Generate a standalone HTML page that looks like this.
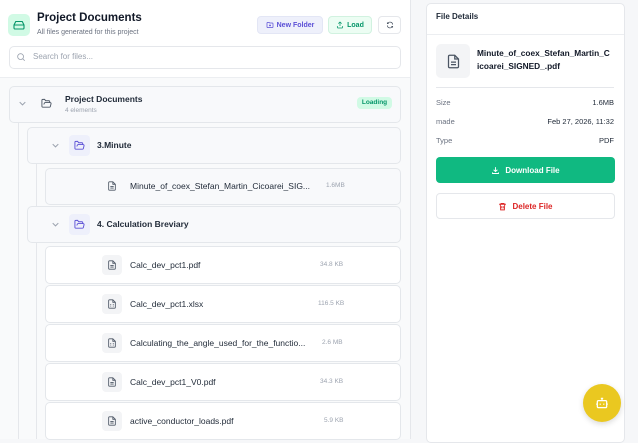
<!DOCTYPE html>
<html><head><style>
*{box-sizing:border-box;margin:0;padding:0}
body{width:638px;height:439px;overflow:hidden;background:#f6f7f9;font-family:"Liberation Sans",sans-serif;position:relative;color:#1f2937}
.abs{position:absolute}
.left{left:0;top:0;width:411px;height:439px;background:#f9fafb;border-right:1px solid #e5e7eb}
.hdr{left:0;top:0;width:410px;height:78px;background:#fff;border-bottom:1px solid #eceef1}
.row{position:absolute;background:#fff;border:1px solid #e4e7eb;border-radius:5px}
.row.f{background:#f8f9fb}
.t{font-size:8.5px;font-weight:bold;color:#1f2937;position:absolute}
.sz{font-size:6.5px;color:#9ca3af;position:absolute}
.ico{position:absolute;width:20px;height:20px;border-radius:4px;background:#f3f4f6;display:flex;align-items:center;justify-content:center}
.vl{position:absolute;width:1px;background:#e5e7eb}
.chev{position:absolute}
</style></head><body>
<div class="abs left"></div>
<div class="abs hdr"></div>
<div class="abs" style="left:8px;top:14px;width:22px;height:22px;border-radius:5px;background:#d1fae5;display:flex;align-items:center;justify-content:center">
<svg width="12" height="12" viewBox="0 0 24 24" fill="none" stroke="#059669" stroke-width="2.2"><path d="M22 12H2M5.5 5h13L22 12v6a2 2 0 0 1-2 2H4a2 2 0 0 1-2-2v-6z"/><path d="M6 16h.01M10 16h.01"/></svg></div>
<div class="abs" style="left:37px;top:12px;font-size:11.5px;font-weight:bold;color:#111827">Project Documents</div>
<div class="abs" style="left:37px;top:29px;font-size:7px;color:#6b7280">All files generated for this project</div>
<div class="abs" style="left:257px;top:16px;width:66px;height:18px;border-radius:4px;background:#eef0fb;border:1px solid #e3e6f5;font-size:7px;font-weight:bold;color:#5b4fd6;display:flex;align-items:center;justify-content:center;gap:3px"><svg width="8" height="8" viewBox="0 0 24 24" fill="none" stroke="#5b4fd6" stroke-width="2.2"><path d="M3 6a2 2 0 0 1 2-2h4l2 2h8a2 2 0 0 1 2 2v10a2 2 0 0 1-2 2H5a2 2 0 0 1-2-2z"/><path d="M12 10v6M9 13h6"/></svg>New Folder</div>
<div class="abs" style="left:328px;top:16px;width:44px;height:18px;border-radius:4px;background:#ecfdf3;border:1px solid #d1f2e0;font-size:7px;font-weight:bold;color:#059669;display:flex;align-items:center;justify-content:center;gap:3px"><svg width="8" height="8" viewBox="0 0 24 24" fill="none" stroke="#059669" stroke-width="2.2"><path d="M12 15V3M7 8l5-5 5 5M4 15v4a2 2 0 0 0 2 2h12a2 2 0 0 0 2-2v-4"/></svg>Load</div>
<div class="abs" style="left:378px;top:16px;width:23px;height:18px;border-radius:4px;background:#fff;border:1px solid #e5e7eb;display:flex;align-items:center;justify-content:center"><svg width="8" height="8" viewBox="0 0 24 24" fill="none" stroke="#4b5563" stroke-width="2.2"><path d="M20 11a8 8 0 0 0-14-5L4 8M4 4v4h4M4 13a8 8 0 0 0 14 5l2-2M20 20v-4h-4"/></svg></div>
<div class="abs" style="left:9px;top:46px;width:392px;height:23px;border:1px solid #e5e7eb;border-radius:5px;background:#fff"></div>
<svg class="abs" style="left:16px;top:52px" width="10" height="10" viewBox="0 0 24 24" fill="none" stroke="#9ca3af" stroke-width="2"><circle cx="11" cy="11" r="7"/><path d="M21 21l-5-5"/></svg>
<div class="abs" style="left:33px;top:52px;font-size:8px;color:#9ca3af">Search for files...</div>

<div class="vl" style="left:18px;top:122px;height:317px"></div>
<div class="vl" style="left:36px;top:163px;height:43px"></div>
<div class="vl" style="left:36px;top:243px;height:196px"></div>

<div class="row f" style="left:9px;top:86px;width:392px;height:37px"></div>
<svg class="chev" style="left:19px;top:101px" width="7" height="5" viewBox="0 0 10 6" fill="none" stroke="#9ca3af" stroke-width="1.4"><path d="M1 1l4 4 4-4"/></svg>
<svg class="abs" style="left:41px;top:98px" width="11" height="11" viewBox="0 0 24 24" fill="none" stroke="#4b5563" stroke-width="2"><path d="M6 14l1.5-3A2 2 0 0 1 9.2 10H20a2 2 0 0 1 1.9 2.5l-1.5 6A2 2 0 0 1 18.5 20H4a2 2 0 0 1-2-2V5a2 2 0 0 1 2-2h4l2 3h7a2 2 0 0 1 2 2v2"/></svg>
<div class="t" style="left:65px;top:94px">Project Documents</div>
<div class="sz" style="left:65px;top:107px;font-size:6.5px">4 elements</div>
<div class="abs" style="left:357px;top:97px;width:35px;height:12px;border-radius:4px;background:#d1fae5;color:#059669;font-size:6.5px;font-weight:bold;text-align:center;line-height:12px">Loading</div>

<div class="row f" style="left:27px;top:127px;width:374px;height:37px"></div>
<svg class="chev" style="left:52px;top:143px" width="7" height="5" viewBox="0 0 10 6" fill="none" stroke="#9ca3af" stroke-width="1.4"><path d="M1 1l4 4 4-4"/></svg>
<div class="ico" style="left:69px;top:135px;width:21px;height:21px;background:#eef0fb"><svg width="11" height="11" viewBox="0 0 24 24" fill="none" stroke="#5b4fd6" stroke-width="2"><path d="M6 14l1.5-3A2 2 0 0 1 9.2 10H20a2 2 0 0 1 1.9 2.5l-1.5 6A2 2 0 0 1 18.5 20H4a2 2 0 0 1-2-2V5a2 2 0 0 1 2-2h4l2 3h7a2 2 0 0 1 2 2v2"/></svg></div>
<div class="t" style="left:97px;top:140px">3.Minute</div>

<div class="row f" style="left:45px;top:168px;width:356px;height:37px"></div>
<div class="ico" style="left:102px;top:176px;background:transparent"><svg width="10" height="10" viewBox="0 0 24 24" fill="none" stroke="#4b5563" stroke-width="2"><path d="M14 2H6a2 2 0 0 0-2 2v16a2 2 0 0 0 2 2h12a2 2 0 0 0 2-2V8z"/><path d="M14 2v6h6M8 13h8M8 17h8"/></svg></div>
<div class="t" style="left:130px;top:181px;font-weight:normal;color:#1f2937">Minute_of_coex_Stefan_Martin_Cicoarei_SIG...</div>
<div class="sz" style="left:326px;top:182px">1.6MB</div>

<div class="row f" style="left:27px;top:206px;width:374px;height:37px"></div>
<svg class="chev" style="left:52px;top:222px" width="7" height="5" viewBox="0 0 10 6" fill="none" stroke="#9ca3af" stroke-width="1.4"><path d="M1 1l4 4 4-4"/></svg>
<div class="ico" style="left:69px;top:214px;width:21px;height:21px;background:#eef0fb"><svg width="11" height="11" viewBox="0 0 24 24" fill="none" stroke="#5b4fd6" stroke-width="2"><path d="M6 14l1.5-3A2 2 0 0 1 9.2 10H20a2 2 0 0 1 1.9 2.5l-1.5 6A2 2 0 0 1 18.5 20H4a2 2 0 0 1-2-2V5a2 2 0 0 1 2-2h4l2 3h7a2 2 0 0 1 2 2v2"/></svg></div>
<div class="t" style="left:97px;top:219px">4. Calculation Breviary</div>

<div class="row" style="left:45px;top:246px;width:356px;height:38px"></div>
<div class="ico" style="left:102px;top:255px"><svg width="10" height="10" viewBox="0 0 24 24" fill="none" stroke="#4b5563" stroke-width="2"><path d="M14 2H6a2 2 0 0 0-2 2v16a2 2 0 0 0 2 2h12a2 2 0 0 0 2-2V8z"/><path d="M14 2v6h6M8 13h8M8 17h8"/></svg></div>
<div class="t" style="left:130px;top:260px;font-weight:normal">Calc_dev_pct1.pdf</div>
<div class="sz" style="left:320px;top:261px">34.8 KB</div>

<div class="row" style="left:45px;top:285px;width:356px;height:38px"></div>
<div class="ico" style="left:102px;top:294px"><svg width="10" height="10" viewBox="0 0 24 24" fill="none" stroke="#4b5563" stroke-width="2"><path d="M14 2H6a2 2 0 0 0-2 2v16a2 2 0 0 0 2 2h12a2 2 0 0 0 2-2V8z"/><path d="M14 2v6h6M8 13h2M14 13h2M8 17h2M14 17h2"/></svg></div>
<div class="t" style="left:130px;top:299px;font-weight:normal">Calc_dev_pct1.xlsx</div>
<div class="sz" style="left:318px;top:300px">116.5 KB</div>

<div class="row" style="left:45px;top:324px;width:356px;height:38px"></div>
<div class="ico" style="left:102px;top:333px"><svg width="10" height="10" viewBox="0 0 24 24" fill="none" stroke="#4b5563" stroke-width="2"><path d="M14 2H6a2 2 0 0 0-2 2v16a2 2 0 0 0 2 2h12a2 2 0 0 0 2-2V8z"/><path d="M14 2v6h6M8 13h2M14 13h2M8 17h2M14 17h2"/></svg></div>
<div class="t" style="left:130px;top:338px;font-weight:normal">Calculating_the_angle_used_for_the_functio...</div>
<div class="sz" style="left:322px;top:339px">2.6 MB</div>

<div class="row" style="left:45px;top:363px;width:356px;height:38px"></div>
<div class="ico" style="left:102px;top:372px"><svg width="10" height="10" viewBox="0 0 24 24" fill="none" stroke="#4b5563" stroke-width="2"><path d="M14 2H6a2 2 0 0 0-2 2v16a2 2 0 0 0 2 2h12a2 2 0 0 0 2-2V8z"/><path d="M14 2v6h6M8 13h8M8 17h8"/></svg></div>
<div class="t" style="left:130px;top:377px;font-weight:normal">Calc_dev_pct1_V0.pdf</div>
<div class="sz" style="left:320px;top:378px">34.3 KB</div>

<div class="row" style="left:45px;top:402px;width:356px;height:38px"></div>
<div class="ico" style="left:102px;top:411px"><svg width="10" height="10" viewBox="0 0 24 24" fill="none" stroke="#4b5563" stroke-width="2"><path d="M14 2H6a2 2 0 0 0-2 2v16a2 2 0 0 0 2 2h12a2 2 0 0 0 2-2V8z"/><path d="M14 2v6h6M8 13h8M8 17h8"/></svg></div>
<div class="t" style="left:130px;top:416px;font-weight:normal">active_conductor_loads.pdf</div>
<div class="sz" style="left:324px;top:417px">5.9 KB</div>

<!-- right panel -->
<div class="abs" style="left:426px;top:3px;width:199px;height:440px;background:#fff;border:1px solid #e5e7eb;border-radius:5px"></div>
<div class="abs" style="left:427px;top:34px;width:197px;height:1px;background:#eceef1"></div>
<div class="abs" style="left:436px;top:12px;font-size:8px;font-weight:bold;color:#1f2937">File Details</div>
<div class="abs" style="left:436px;top:44px;width:34px;height:34px;border-radius:5px;background:#f3f4f6;display:flex;align-items:center;justify-content:center"><svg width="15" height="15" viewBox="0 0 24 24" fill="none" stroke="#4b5563" stroke-width="2"><path d="M14 2H6a2 2 0 0 0-2 2v16a2 2 0 0 0 2 2h12a2 2 0 0 0 2-2V8z"/><path d="M14 2v6h6M8 13h8M8 17h8"/></svg></div>
<div class="abs" style="left:477px;top:47px;width:136px;font-size:8.3px;font-weight:bold;line-height:13px;color:#111827">Minute_of_coex_Stefan_Martin_C<br>icoarei_SIGNED_.pdf</div>
<div class="abs" style="left:436px;top:87px;width:178px;height:1px;background:#e5e7eb"></div>
<div class="abs" style="left:436px;top:98px;font-size:7.5px;color:#6b7280">Size</div>
<div class="abs" style="left:436px;top:117px;font-size:7.5px;color:#6b7280">made</div>
<div class="abs" style="left:436px;top:136px;font-size:7.5px;color:#6b7280">Type</div>
<div class="abs" style="right:24px;top:98px;font-size:7.5px;color:#1f2937">1.6MB</div>
<div class="abs" style="right:24px;top:117px;font-size:7.5px;color:#1f2937">Feb 27, 2026, 11:32</div>
<div class="abs" style="right:24px;top:136px;font-size:7.5px;color:#1f2937">PDF</div>
<div class="abs" style="left:436px;top:157px;width:179px;height:26px;border-radius:4px;background:#10b981;color:#fff;font-size:8px;font-weight:bold;display:flex;align-items:center;justify-content:center;gap:5px"><svg width="9" height="9" viewBox="0 0 24 24" fill="none" stroke="#fff" stroke-width="2.4"><path d="M12 3v12M7 10l5 5 5-5M4 17v3h16v-3"/></svg>Download File</div>
<div class="abs" style="left:436px;top:193px;width:179px;height:26px;border-radius:4px;background:#fff;border:1px solid #e5e7eb;color:#dc2626;font-size:8px;font-weight:bold;display:flex;align-items:center;justify-content:center;gap:5px"><svg width="9" height="9" viewBox="0 0 24 24" fill="none" stroke="#dc2626" stroke-width="2.4"><path d="M3 6h18M8 6V4h8v2M6 6l1 15h10l1-15M10 11v6M14 11v6"/></svg>Delete File</div>
<div class="abs" style="left:583px;top:384px;width:38px;height:38px;border-radius:50%;background:#eac820;box-shadow:0 2px 6px rgba(0,0,0,.15);display:flex;align-items:center;justify-content:center"><svg width="14" height="14" viewBox="0 0 24 24" fill="none" stroke="#fff" stroke-width="2.2"><rect x="4" y="8" width="16" height="12" rx="2"/><path d="M12 8V4M10 4h4M9 13v2M15 13v2M2 14h2M20 14h2"/></svg></div>
</body></html>
